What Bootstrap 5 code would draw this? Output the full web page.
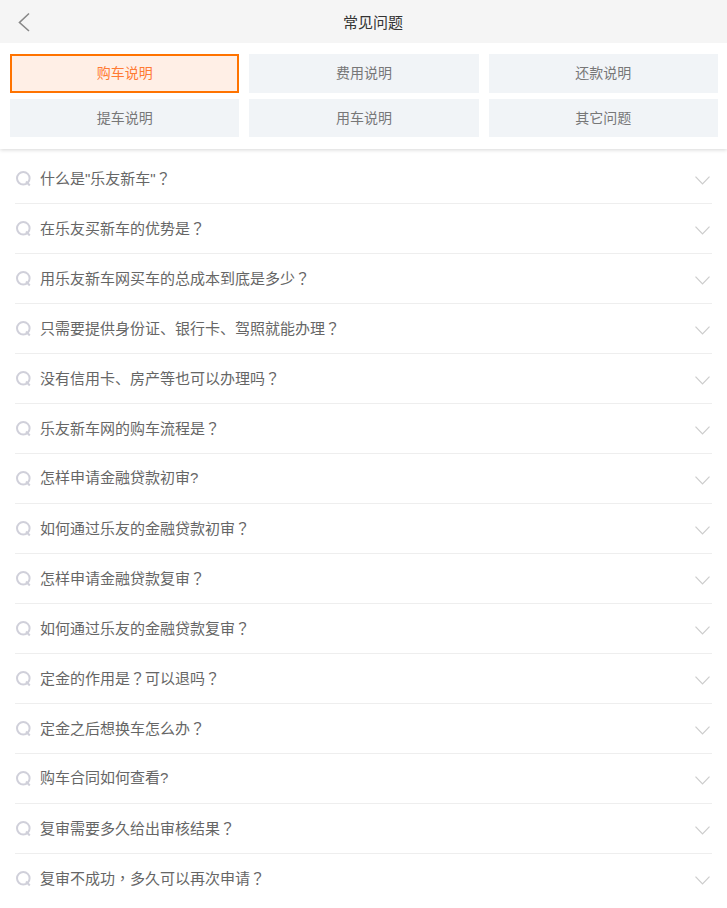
<!DOCTYPE html>
<html lang="zh">
<head>
<meta charset="utf-8">
<title>常见问题</title>
<link href="https://cdn.jsdelivr.net/npm/bootstrap@5.3.0/dist/css/bootstrap.min.css" rel="stylesheet">
<style>
body{font-family:"Liberation Sans","Noto Sans CJK SC",sans-serif;background:#fff;color:#666;font-size:15px;overflow:hidden}
.top-bar{height:43px;background:#f5f5f5;z-index:2}
.back-link{left:17px;top:12px;line-height:0}
.top-title{font-size:15px;color:#333;line-height:45px;padding-left:19px}
.tab-panel{height:106px;padding:11px 9px 0 10px;box-shadow:0 1px 4px rgba(0,0,0,.16);display:grid;grid-template-columns:repeat(3,1fr);column-gap:10px;row-gap:6px;grid-auto-rows:38.5px}
.tab-btn{background:#f1f4f7;color:#777;font-size:14px;border:0;border-radius:0;padding:0;line-height:38px}
.tab-btn.on,.tab-btn.on:hover{background:#ffefe6;color:#ff7a33;border:2px solid #ff7300;line-height:34px}
.faq-list{padding:5px 15px 0}
.faq-row{height:50px;border:0;border-bottom:1px solid #eee;border-radius:0;padding:0;gap:9px;color:#666;font-size:15px;background:transparent}
.faq-text{flex:1;line-height:49px;margin-top:-2px}
.faq-text i{font-style:normal;font-family:"Noto Sans CJK TC",sans-serif}
.ico-q{margin-left:1px;margin-top:-1px}
.chev{margin-right:2px;margin-top:3px}
</style>
</head>
<body>
<div class="top-bar position-relative text-center">
  <a class="back-link position-absolute" href="#" aria-label="返回"><svg width="14" height="20" viewBox="0 0 14 20"><path d="M12 1.500 2.500 10.500 12 19" fill="none" stroke="#888" stroke-width="1.6"/></svg></a>
  <span class="top-title">常见问题</span>
</div>
<div class="tab-panel position-relative bg-white">
  <button class="btn tab-btn on">购车说明</button>
  <button class="btn tab-btn">费用说明</button>
  <button class="btn tab-btn">还款说明</button>
  <button class="btn tab-btn">提车说明</button>
  <button class="btn tab-btn">用车说明</button>
  <button class="btn tab-btn">其它问题</button>
</div>
<div class="faq-list list-group list-group-flush" id="faq"></div>
<script>
var qs=["什么是\"乐友新车\"？","在乐友买新车的优势是？","用乐友新车网买车的总成本到底是多少？","只需要提供身份证、银行卡、驾照就能办理？","没有信用卡、房产等也可以办理吗？","乐友新车网的购车流程是？","怎样申请金融贷款初审?","如何通过乐友的金融贷款初审？","怎样申请金融贷款复审？","如何通过乐友的金融贷款复审？","定金的作用是？可以退吗？","定金之后想换车怎么办？","购车合同如何查看?","复审需要多久给出审核结果？","复审不成功，多久可以再次申请？"];
var q='<svg class="ico-q" width="15" height="15" viewBox="0 0 15 15"><circle cx="7.300" cy="7.300" r="6.300" fill="none" stroke="#d0d0da" stroke-width="2"/><path d="M10 10.500 13.800 14.500" stroke="#d0d0da" stroke-width="2" fill="none"/></svg>';
var c='<svg class="chev" width="15" height="9" viewBox="0 0 15 9"><path d="M.5.7 7.500 8 14.500.7" fill="none" stroke="#ccc" stroke-width="1.2"/></svg>';
document.getElementById('faq').innerHTML=qs.map(function(t){return '<div class="list-group-item faq-row d-flex align-items-center">'+q+'<span class="faq-text">'+t.replace(/[？，]/g,'<i lang="zh-Hant">$&</i>')+'</span>'+c+'</div>'}).join('');
</script>
<script src="https://cdn.jsdelivr.net/npm/bootstrap@5.3.0/dist/js/bootstrap.bundle.min.js"></script>
</body>
</html>
